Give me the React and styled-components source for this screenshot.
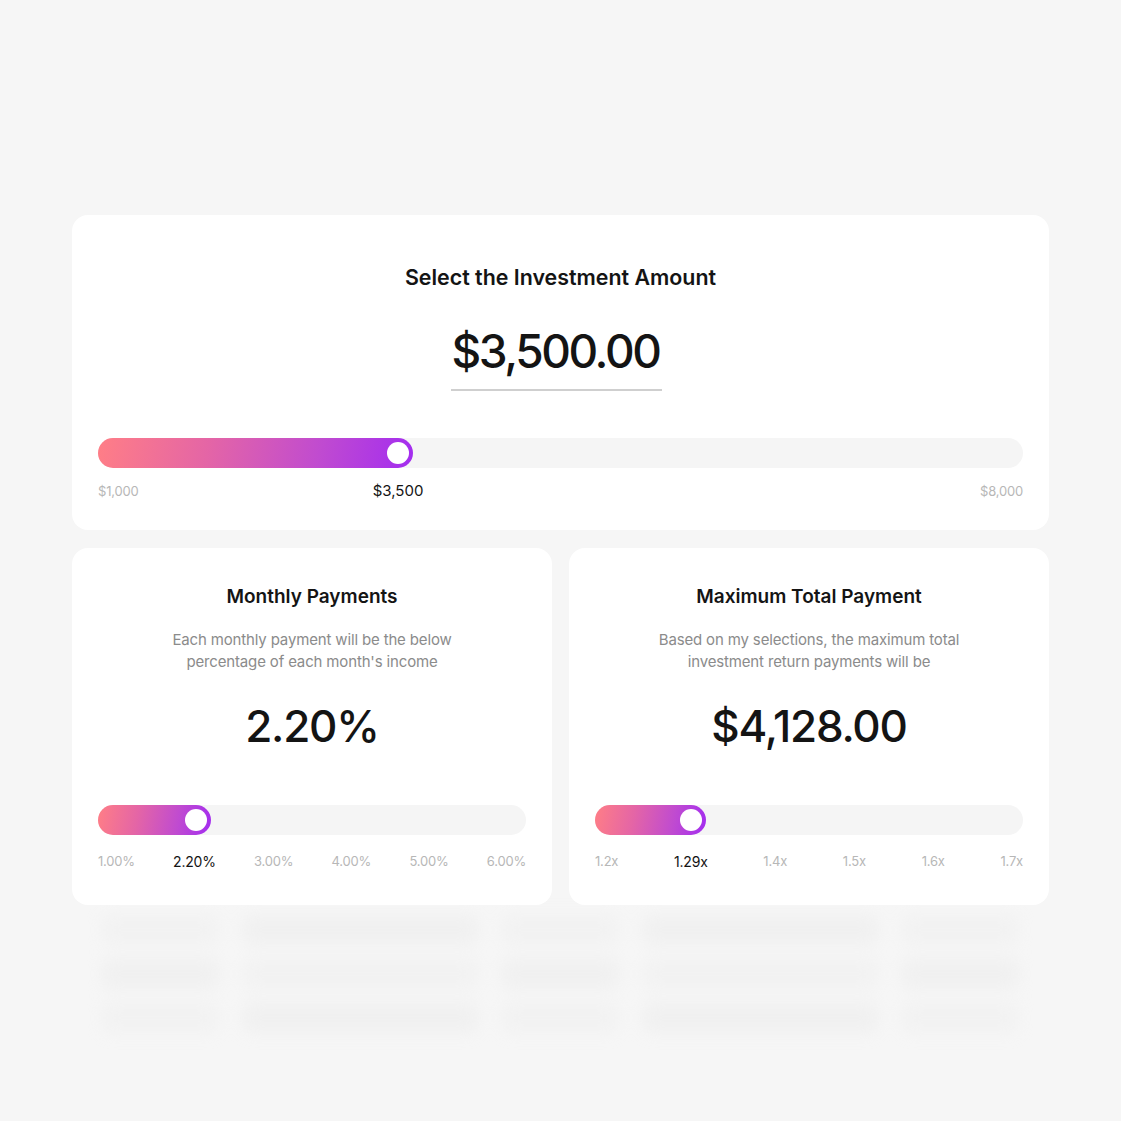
import React from 'react'
import styled, { createGlobalStyle } from 'styled-components'

const GlobalStyle = createGlobalStyle`
  html, body {
    margin: 0;
    padding: 0;
    background: #f6f6f6;
    font-family: Inter, 'Noto Sans', 'Liberation Sans', sans-serif;
    color: #141414;
  }
`

const Page = styled.div`
  width: 1121px;
  min-height: 1121px;
  padding-top: 215px;
  box-sizing: border-box;
  overflow: hidden;
`

const Layout = styled.div`
  width: 977px;
  margin: 0 auto;
  display: flex;
  flex-direction: column;
  gap: 18px;
  position: relative;
  z-index: 1;
`

const Row = styled.div`
  display: grid;
  grid-template-columns: 480px 480px;
  gap: 17px;
`

const Card = styled.section`
  background: #fff;
  border-radius: 16px;
  padding: ${p => (p.$big ? '50px 26px 30px' : '37px 26px 35px')};
  display: flex;
  flex-direction: column;
  align-items: center;
  text-align: center;
`

const Title = styled.h2`
  margin: 0;
  font-size: ${p => (p.$big ? '21.4px' : '19px')};
  line-height: 24px;
  font-weight: 600;
  color: #141414;
`

const Subtitle = styled.p`
  margin: 20px 0 0;
  font-size: 15px;
  line-height: 22px;
  letter-spacing: -0.15px;
  color: #8b8b8b;
  max-width: 320px;
`

const Amount = styled.div`
  margin-top: 34px;
  margin-right: 8px;
  font-size: 46px;
  line-height: 56px;
  font-weight: 500;
  letter-spacing: -2.4px;
  border-bottom: 2px solid #cfcfcf;
  padding: 0 2px 10px 0;
`

const Value = styled.div`
  margin-top: 27px;
  font-size: 44px;
  line-height: 52px;
  font-weight: 500;
  letter-spacing: -1.2px;
`

const SliderWrap = styled.div`
  align-self: stretch;
  margin-top: ${p => p.$top}px;
`

const Track = styled.div`
  height: 30px;
  border-radius: 15px;
  background: #f5f5f5;
`

const Fill = styled.div`
  height: 30px;
  border-radius: 15px;
  background: linear-gradient(100deg, #ff7e86 0%, #e465a6 35%, #c04bd0 70%, #a32cf0 100%);
  display: flex;
  align-items: center;
  justify-content: flex-end;
  padding-right: 4px;
  box-sizing: border-box;
  min-width: 30px;
`

const Thumb = styled.span`
  width: 22px;
  height: 22px;
  border-radius: 50%;
  background: #fff;
`

const Scale = styled.div`
  position: relative;
  display: flex;
  justify-content: space-between;
  margin-top: ${p => p.$gap || 14}px;
  height: 18px;
`

const Tick = styled.span`
  font-size: ${p => (p.$active ? '14px' : '13px')};
  line-height: 18px;
  color: ${p => (p.$active ? '#141414' : '#b7b7b7')};
  margin-top: ${p => (p.$active ? '1px' : '0')};
  letter-spacing: -0.2px;
`

const Marker = styled.span`
  position: absolute;
  top: 0;
  transform: translateX(-50%);
  font-size: 15px;
  line-height: 18px;
  color: #141414;
`

const Ghost = styled.div`
  width: 977px;
  margin: -10px auto 0;
  display: flex;
  flex-direction: column;
  gap: 14px;
  padding: 20px 30px;
  box-sizing: border-box;
  filter: blur(8px);
  opacity: 0.35;
`

const GhostRow = styled.div`
  display: grid;
  grid-template-columns: 1fr 2fr 1fr 2fr 1fr;
  gap: 24px;
`

const GhostBar = styled.div`
  height: 30px;
  border-radius: 8px;
  background: ${p => (p.$dark ? '#e6e6e6' : '#ebebeb')};
`

const Slider = ({ percent, top, gap, children }) => (
  <SliderWrap $top={top}>
    <Track>
      <Fill style={{ width: `${percent}%` }}>
        <Thumb />
      </Fill>
    </Track>
    <Scale $gap={gap}>{children}</Scale>
  </SliderWrap>
)

const rates = ['1.00%', '2.20%', '3.00%', '4.00%', '5.00%', '6.00%']
const multipliers = ['1.2x', '1.29x', '1.4x', '1.5x', '1.6x', '1.7x']

const App = () => (
  <Page>
    <GlobalStyle />
    <Layout>
      <Card $big>
        <Title $big>Select the Investment Amount</Title>
        <Amount>$3,500.00</Amount>
        <Slider percent={34} top={47} gap={14}>
          <Tick>$1,000</Tick>
          <Marker style={{ left: `${((398 - 98) / 925) * 100}%` }}>$3,500</Marker>
          <Tick>$8,000</Tick>
        </Slider>
      </Card>
      <Row>
        <Card>
          <Title>Monthly Payments</Title>
          <Subtitle>Each monthly payment will be the below percentage of each month's income</Subtitle>
          <Value>2.20%</Value>
          <Slider percent={26.4} top={53} gap={17}>
            {rates.map(r => (
              <Tick key={r} $active={r === '2.20%'}>{r}</Tick>
            ))}
          </Slider>
        </Card>
        <Card>
          <Title>Maximum Total Payment</Title>
          <Subtitle>Based on my selections, the maximum total investment return payments will be</Subtitle>
          <Value>$4,128.00</Value>
          <Slider percent={26} top={53} gap={17}>
            {multipliers.map(m => (
              <Tick key={m} $active={m === '1.29x'}>{m}</Tick>
            ))}
          </Slider>
        </Card>
      </Row>
    </Layout>
    <Ghost>
      <GhostRow>
        <GhostBar /><GhostBar $dark /><GhostBar /><GhostBar $dark /><GhostBar />
      </GhostRow>
      <GhostRow>
        <GhostBar $dark /><GhostBar /><GhostBar $dark /><GhostBar /><GhostBar $dark />
      </GhostRow>
      <GhostRow>
        <GhostBar /><GhostBar $dark /><GhostBar /><GhostBar $dark /><GhostBar />
      </GhostRow>
    </Ghost>
  </Page>
)

export default App
